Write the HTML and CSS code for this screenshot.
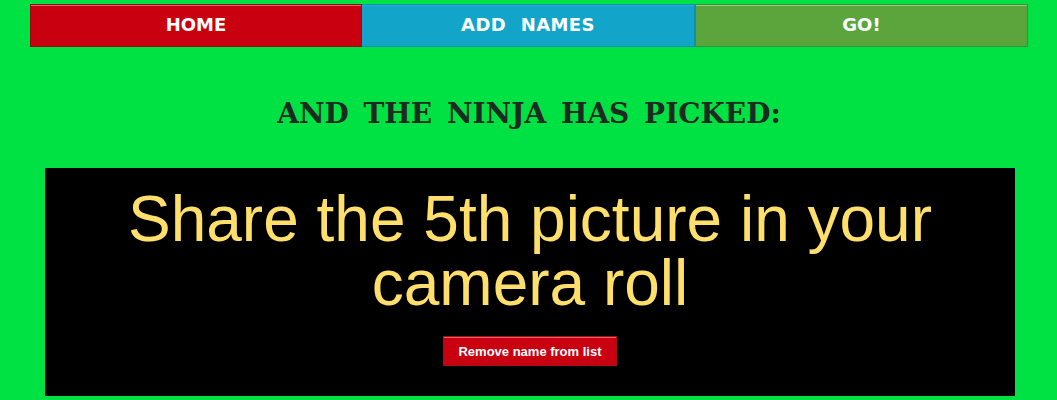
FILE: index.html
```html
<!DOCTYPE html>
<html lang="en">
<head>
<meta charset="utf-8">
<title>Ninja Picker</title>
<link rel="stylesheet" href="styles.css">
</head>
<body>
<nav class="nav">
  <a class="nav-item nav-home" href="#">HOME</a>
  <a class="nav-item nav-add" href="#">ADD NAMES</a>
  <a class="nav-item nav-go" href="#">GO!</a>
</nav>
<h1 class="heading">AND THE NINJA HAS PICKED:</h1>
<section class="panel">
  <p class="task">Share the 5th picture in your camera roll</p>
  <button class="remove" type="button">Remove name from list</button>
</section>
</body>
</html>
```
FILE: styles.css
```css
* { box-sizing: border-box; }
html, body { height: 100%; }
body {
  margin: 0;
  padding: 4px 29px 0 30px;
  background: #00e244;
  overflow: hidden;
  font-family: "Liberation Sans", Arial, sans-serif;
}
.nav {
  display: grid;
  grid-template-columns: 332px 333px 333px;
  height: 43px;
}
.nav-item {
  display: flex;
  align-items: center;
  justify-content: center;
  padding-bottom: 2px;
  color: #fff;
  font-family: "DejaVu Sans", sans-serif;
  font-weight: 700;
  font-size: 18px;
  text-decoration: none;
  border: 1px solid;
  box-shadow: inset 0 1px 0 rgba(255, 255, 255, 0.4);
}
.nav-home { background: #c80010; border-color: #8f0f12; }
.nav-add {
  background: #12a5c9;
  border-color: #0f90b0;
  border-left: 0;
  box-shadow: inset 0 1px 0 rgba(255, 255, 255, 0.1);
  letter-spacing: 0.4px;
  word-spacing: 8px;
}
.nav-go { background: #5ca53c; border-color: #2f9440; }
.heading {
  margin: 51px 0 0;
  height: 70px;
  text-align: center;
  color: #1b2b22;
  font-family: "DejaVu Serif", serif;
  font-weight: 700;
  font-size: 28px;
  line-height: 32px;
  word-spacing: 5px;
}
.panel {
  margin: 0 13px 0 15px;
  height: 228px;
  padding-top: 19px;
  background: #000;
  display: flex;
  flex-direction: column;
  align-items: center;
}
.task {
  margin: 0;
  width: 840px;
  text-align: center;
  color: #ffdf6b;
  font-size: 64px;
  line-height: 64px;
}
.remove {
  margin-top: 21px;
  width: 174px;
  height: 30px;
  padding: 0;
  background: #c80010;
  border: 1px solid #a80c14;
  box-shadow: inset 0 1px 0 rgba(255, 255, 255, 0.4);
  color: #fff;
  font-family: "Liberation Sans", Arial, sans-serif;
  font-weight: 700;
  font-size: 13px;
}
```
